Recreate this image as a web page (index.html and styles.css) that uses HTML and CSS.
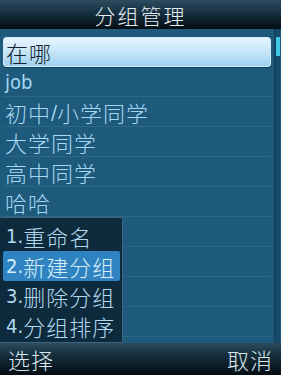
FILE: index.html
```html
<!DOCTYPE html>
<html lang="zh">
<head>
<meta charset="utf-8">
<link rel="stylesheet" href="styles.css">
</head>
<body>
<div class="screen">
  <div class="titlebar">分组管理</div>
  <div class="content">
    <div class="list">
      <div class="row selected">在哪</div>
      <div class="row"><span class="lat">job</span></div>
      <div class="row">初中<span class="lat">/</span>小学同学</div>
      <div class="row">大学同学</div>
      <div class="row">高中同学</div>
      <div class="row">哈哈</div>
      <div class="row"></div>
      <div class="row"></div>
      <div class="row"></div>
      <div class="row last"></div>
    </div>
    <div class="scrollbar"><div class="thumb"></div></div>
    <div class="menu">
      <div class="mitem"><span class="lat">1.</span>重命名</div>
      <div class="mitem active"><span class="lat">2.</span>新建分组</div>
      <div class="mitem"><span class="lat">3.</span>删除分组</div>
      <div class="mitem"><span class="lat">4.</span>分组排序</div>
    </div>
  </div>
  <div class="softkeys">
    <span>选择</span>
    <span>取消</span>
  </div>
</div>
</body>
</html>
```
FILE: styles.css
```css
html, body {
  margin: 0;
  padding: 0;
}
body {
  width: 281px;
  height: 375px;
  overflow: hidden;
  font-family: "Noto Sans CJK SC", sans-serif;
  font-weight: 300;
}
.screen {
  width: 281px;
  height: 375px;
  display: flex;
  flex-direction: column;
  background: #1d5878;
}
.titlebar {
  height: 29px;
  box-sizing: border-box;
  padding-top: 2px;
  flex: none;
  display: flex;
  align-items: center;
  justify-content: center;
  background: linear-gradient(to bottom, #2c4c60 0%, #163040 45%, #050d13 100%);
  color: #e6eef2;
  font-size: 21px;
  letter-spacing: 2px;
  line-height: 27px;
}
.content {
  flex: 1;
  position: relative;
  display: flex;
  background: #1d5a7c;
}
.list {
  flex: 1;
  padding: 8px 3px 0 3px;
  display: flex;
  flex-direction: column;
}
.row {
  height: 30px;
  flex: none;
  box-sizing: border-box;
  border-bottom: 1px solid #2a6788;
  color: #a6d6f0;
  font-size: 22px;
  letter-spacing: 1px;
  line-height: 28px;
  padding-left: 2px;
  display: flex;
  align-items: center;
  white-space: nowrap;
}
.row.selected {
  background: linear-gradient(to bottom, #e6f5fd 0%, #c6e6f8 50%, #9fd0ef 100%);
  border: 1px solid #cfeafa;
  border-radius: 3px;
  color: #10202c;
  box-shadow: 0 1px 0 #14405a;
}
.lat {
  font-family: "DejaVu Sans Condensed", "Liberation Sans Narrow", "Noto Sans CJK SC", sans-serif;
  font-stretch: condensed;
  font-weight: 400;
  font-size: 20px;
  letter-spacing: 0;
}
.scrollbar {
  width: 5px;
  flex: none;
  margin-right: 1px;
  background: #174a68;
  border-left: 1px solid #123c55;
  position: relative;
}
.thumb {
  position: absolute;
  left: 1px;
  right: 0;
  top: 8px;
  height: 19px;
  background: #3cc9e4;
}
.menu {
  position: absolute;
  left: 0;
  top: 188px;
  width: 123px;
  height: 126px;
  box-sizing: border-box;
  background: #0e2b3e;
  border: 1px solid #3b6580;
  border-left: none;
  padding: 3px 2px 0 3px;
  display: flex;
  flex-direction: column;
}
.mitem {
  height: 30px;
  flex: none;
  color: #b3d9ee;
  font-size: 22px;
  letter-spacing: 1px;
  line-height: 28px;
  padding-left: 3px;
  display: flex;
  align-items: center;
  white-space: nowrap;
  border-radius: 2px;
}
.mitem.active {
  background: #2f83c0;
  color: #d8eef9;
}
.softkeys {
  height: 32px;
  flex: none;
  display: flex;
  justify-content: space-between;
  align-items: center;
  padding: 0 8px 0 8px;
  background: linear-gradient(to bottom, #2d4d60 0%, #15303f 35%, #050d13 100%);
  color: #dce6ec;
  font-size: 22px;
  letter-spacing: 1px;
  line-height: 32px;
}
```
